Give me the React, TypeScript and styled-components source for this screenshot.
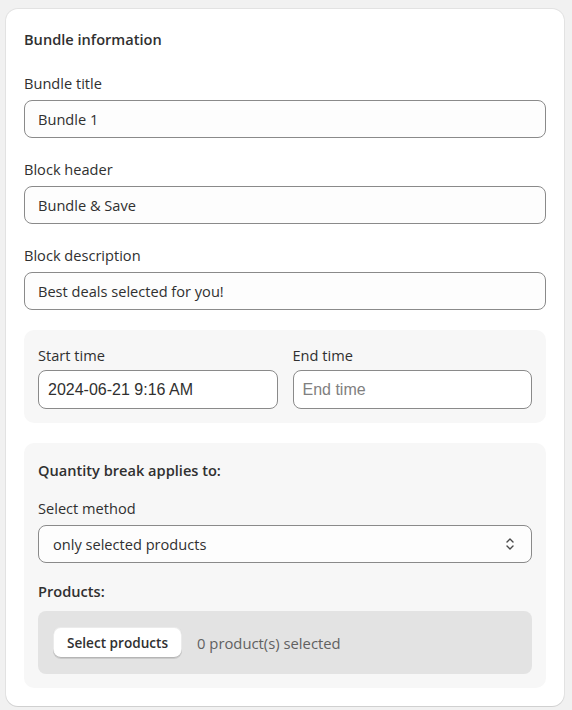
import styled, { createGlobalStyle } from 'styled-components';

const GlobalStyle = createGlobalStyle`
  body {
    margin: 0;
    background: #f1f1f1;
    font-family: 'Open Sans', 'Noto Sans', sans-serif;
    color: #303030;
  }
`;

const Page = styled.div`
  padding: 9px 8px 5px 6px;
`;

const Card = styled.div`
  background: #ffffff;
  border-radius: 12px;
  padding: 19px 18px 18px;
  box-shadow: 0 1px 0 rgba(0, 0, 0, 0.08), 0 0 0 1px rgba(0, 0, 0, 0.06);
  display: flex;
  flex-direction: column;
`;

const Title = styled.h2`
  margin: 0 0 23px;
  font-size: 14.6px;
  line-height: 22px;
  font-weight: 600;
`;

const Field = styled.div<{ $gap?: number; $mb?: number }>`
  display: flex;
  flex-direction: column;
  gap: ${(p) => p.$gap ?? 7}px;
  margin-bottom: ${(p) => p.$mb ?? 21}px;
  flex: 1;
  min-width: 0;
`;

const Label = styled.label`
  font-size: 14.6px;
  line-height: 20px;
`;

const TextInput = styled.input<{ $native?: boolean }>`
  box-sizing: border-box;
  width: 100%;
  height: ${(p) => (p.$native ? 39 : 38)}px;
  border: 1px solid #8a8a8a;
  border-radius: 8px;
  background: ${(p) => (p.$native ? '#ffffff' : '#fdfdfd')};
  padding: 0 ${(p) => (p.$native ? 9 : 13)}px;
  font-family: ${(p) => (p.$native ? "'Liberation Sans', Arial, sans-serif" : "'Open Sans', 'Noto Sans', sans-serif")};
  font-size: ${(p) => (p.$native ? 16 : 14.6)}px;
  color: #303030;
  outline: none;

  &::placeholder {
    color: #808080;
  }
`;

const Section = styled.div`
  background: #f7f7f7;
  border-radius: 10px;
  padding: 15px 14px 14px;
  margin-bottom: 20px;

  &:last-child {
    margin-bottom: 0;
  }
`;

const TimeRow = styled.div`
  display: flex;
  gap: 15px;
`;

const SubTitle = styled.div<{ $mb: number }>`
  font-size: 14.6px;
  font-weight: 600;
  line-height: 24px;
  margin-bottom: ${(p) => p.$mb}px;
`;

const SelectBox = styled.div`
  box-sizing: border-box;
  height: 38px;
  border: 1px solid #8a8a8a;
  border-radius: 8px;
  background: #fdfdfd;
  padding: 0 15px 0 14px;
  display: flex;
  align-items: center;
  justify-content: space-between;
  font-size: 14.6px;
`;

const ProductsBox = styled.div`
  background: #e3e3e3;
  border-radius: 8px;
  padding: 16px 15px;
  display: flex;
  align-items: center;
  gap: 15px;
`;

const Button = styled.button`
  height: 31px;
  padding: 0 14px;
  border: none;
  border-radius: 8px;
  background: #ffffff;
  font-family: 'Open Sans', 'Noto Sans', sans-serif;
  font-size: 13.6px;
  font-weight: 600;
  color: #303030;
  box-shadow: 0 -1px 0 #b5b5b5 inset, 0 0 0 1px rgba(0, 0, 0, 0.08) inset, 0 1px 0 rgba(0, 0, 0, 0.1);
`;

const Muted = styled.span`
  font-size: 14.8px;
  color: #616161;
`;

const Chevrons = () => (
  <svg width='12' height='16' viewBox='0 0 12 16' fill='none' stroke='#4a4a4a' strokeWidth='1.4' strokeLinecap='round' strokeLinejoin='round'>
    <path d='M3 6 L6 3 L9 6' />
    <path d='M3 10 L6 13 L9 10' />
  </svg>
);

export default function App() {
  return (
    <Page>
      <GlobalStyle />
      <Card>
        <Title>Bundle information</Title>
        <Field>
          <Label>Bundle title</Label>
          <TextInput defaultValue='Bundle 1' />
        </Field>
        <Field>
          <Label>Block header</Label>
          <TextInput defaultValue={'Bundle & Save'} />
        </Field>
        <Field $mb={20}>
          <Label>Block description</Label>
          <TextInput defaultValue='Best deals selected for you!' />
        </Field>
        <Section>
          <TimeRow>
            <Field $gap={5} $mb={0}>
              <Label>Start time</Label>
              <TextInput $native defaultValue='2024-06-21 9:16 AM' />
            </Field>
            <Field $gap={5} $mb={0}>
              <Label>End time</Label>
              <TextInput $native placeholder='End time' />
            </Field>
          </TimeRow>
        </Section>
        <Section>
          <SubTitle $mb={16}>Quantity break applies to:</SubTitle>
          <Field $mb={16}>
            <Label>Select method</Label>
            <SelectBox>
              <span>only selected products</span>
              <Chevrons />
            </SelectBox>
          </Field>
          <SubTitle $mb={8}>Products:</SubTitle>
          <ProductsBox>
            <Button type='button'>Select products</Button>
            <Muted>0 product(s) selected</Muted>
          </ProductsBox>
        </Section>
      </Card>
    </Page>
  );
}
